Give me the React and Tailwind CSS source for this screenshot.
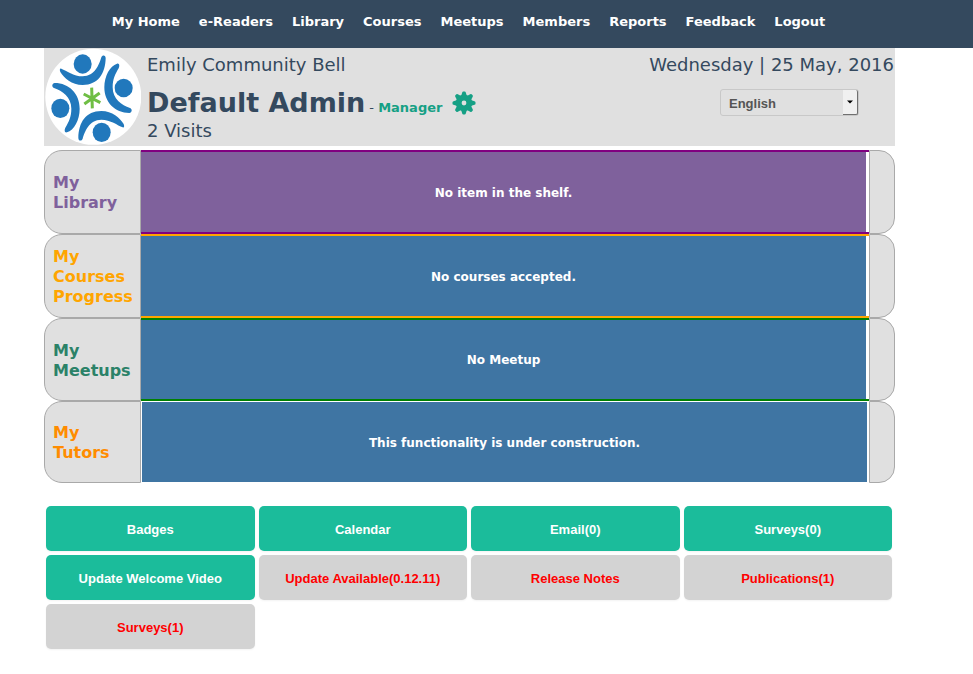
const NAV_ITEMS = ['My Home', 'e-Readers', 'Library', 'Courses', 'Meetups', 'Members', 'Reports', 'Feedback', 'Logout'];

const SHELVES = [
  {
    title: 'My Library',
    message: 'No item in the shelf.',
    titleClass: 'text-[#7f619c]',
    frameClass: 'h-[84px] border-y-2 border-[#800080] pr-[3px]',
    fillClass: 'bg-[#7f619c]',
  },
  {
    title: 'My Courses Progress',
    message: 'No courses accepted.',
    titleClass: 'text-[#ffa500]',
    frameClass: 'h-[84px] border-y-2 border-[#ffa500] pr-[3px]',
    fillClass: 'bg-[#3f75a3]',
  },
  {
    title: 'My Meetups',
    message: 'No Meetup',
    titleClass: 'text-[#2b8268]',
    frameClass: 'h-[83px] border-y-2 border-[#008000] pr-[3px]',
    fillClass: 'bg-[#3f75a3]',
  },
  {
    title: 'My Tutors',
    message: 'This functionality is under construction.',
    titleClass: 'text-[#ff8c00]',
    frameClass: 'h-[82px] py-px pl-px pr-0.5',
    fillClass: 'bg-[#3f75a3]',
  },
];

const ACTIONS = [
  { label: 'Badges' },
  { label: 'Calendar' },
  { label: 'Email(0)' },
  { label: 'Surveys(0)' },
  { label: 'Update Welcome Video' },
  { label: 'Update Available(0.12.11)', alert: true },
  { label: 'Release Notes', alert: true },
  { label: 'Publications(1)', alert: true },
  { label: 'Surveys(1)', alert: true },
];

const TEETH = [0, 45, 90, 135, 180, 225, 270, 315];

function Logo() {
  const arms = (
    <>
      <path d="M64 74C80 80 100 97 128 97C165 97 178 60 184 40C187 32 197 32 197 43C196 88 175 123 128 123C95 123 72 102 61 84C58 76 60 72 64 74Z" />
      <path d="M231 59C239 57 239 67 236 73C226 90 218 105 218 130C218 165 245 184 270 192C278 196 276 206 268 207C225 207 193 175 193 130C193 95 210 66 231 59Z" />
    </>
  );
  return (
    <svg viewBox="12 12 291 294" className="h-[98px] w-[97px] shrink-0" role="img" aria-label="Community logo">
      <circle cx="160" cy="158.500" r="144" fill="#fff" />
      <g fill="#2178bc">
        {arms}
        <g transform="rotate(180 156 162)">{arms}</g>
        <ellipse cx="128" cy="60" rx="27" ry="29" />
        <ellipse cx="251" cy="132" rx="27" ry="28" />
        <ellipse cx="61" cy="193" rx="27" ry="29" />
        <ellipse cx="185" cy="265" rx="27" ry="29" />
      </g>
      <path d="M155 131L157 193M131 150L181 176M133 180L179 147" stroke="#6fbe44" strokeWidth="9" fill="none" />
    </svg>
  );
}

function Gear() {
  return (
    <svg viewBox="-12 -12 24 24" className="size-6" fill="#16a085" aria-hidden="true">
      {TEETH.map((angle) => (
        <path key={angle} d="M-3.200 -6L-1.800 -10.500Q-1.500 -11.500 -0.700 -11.500L0.700 -11.500Q1.500 -11.500 1.800 -10.500L3.200 -6Z" transform={`rotate(${angle})`} />
      ))}
      <path fillRule="evenodd" d="M0 -8.200A8.200 8.200 0 1 1 0 8.200A8.200 8.200 0 1 1 0 -8.200ZM0 -2.400A2.400 2.400 0 1 0 0 2.400A2.400 2.400 0 1 0 0 -2.400Z" />
    </svg>
  );
}

function Shelf({ title, message, titleClass, frameClass, fillClass }) {
  return (
    <section className="flex">
      <h2 className={`flex w-[97px] shrink-0 items-center rounded-l-[18px] border border-[#a9a9a9] bg-[#e0e0e0] pt-0.5 pr-1 pl-2 text-base leading-5 font-bold ${titleClass}`}>
        <span className="w-20">{title}</span>
      </h2>
      <div className={`min-w-0 grow ${frameClass}`}>
        <p className={`flex h-full items-center justify-center pt-px text-xs font-bold text-white ${fillClass}`}>{message}</p>
      </div>
      <div className="w-[26px] shrink-0 rounded-r-[16px] border border-[#a9a9a9] bg-[#e0e0e0]" />
    </section>
  );
}

export default function App() {
  return (
    <div className="min-h-screen bg-white font-['DejaVu_Sans',Verdana,sans-serif] text-[#34495e]">
      <nav className="flex h-12 items-center bg-[#34495e] pr-[36px] pb-1">
        <ul className="flex grow justify-center gap-[19px] text-[13px] leading-5 font-bold text-white">
          {NAV_ITEMS.map((item) => (
            <li key={item}>
              <a href="#" className="whitespace-nowrap">{item}</a>
            </li>
          ))}
        </ul>
      </nav>
      <main className="mr-[78px] ml-11">
        <header className="flex bg-[#e0e0e0]">
          <Logo />
          <div className="flex grow flex-col pt-1 pl-1.5">
            <p className="text-lg leading-[26px]">Emily Community Bell</p>
            <h1 className="flex items-center pt-[5px]">
              <span className="text-[27px] leading-10 font-bold whitespace-nowrap">Default Admin</span>
              <span className="pt-2.5 pl-1 text-[13px] leading-5 whitespace-nowrap">
                - <a href="#" className="font-bold text-[#16a085]">Manager</a>
              </span>
              <button type="button" aria-label="Settings" className="ml-2.5">
                <Gear />
              </button>
            </h1>
            <p className="-mt-1 text-lg leading-6">2 Visits</p>
          </div>
          <div className="flex flex-col items-end pt-1">
            <p className="pr-px text-lg leading-[26px] whitespace-nowrap">Wednesday | 25 May, 2016</p>
            <div className="relative mt-[11px] mr-9 h-[27px] w-[139px]">
              <select aria-label="Language" className="size-full appearance-none rounded-[3px] border border-[#c8c8c8] bg-[#e0e0e0] pt-0.5 pl-2 font-['Liberation_Sans',Arial,sans-serif] text-[13px] leading-5 font-bold text-[#555]">
                <option>English</option>
              </select>
              <span className="pointer-events-none absolute top-px right-px bottom-px flex w-[15px] items-center justify-center rounded-r-[2px] border-r border-b border-[#707070] bg-[#f0f0f0]">
                <svg viewBox="0 0 6 4" className="h-1 w-1.5" aria-hidden="true"><path d="M0 0.500H6L3 3.500Z" fill="#000" /></svg>
              </span>
            </div>
          </div>
        </header>
        <div className="mt-1">
          {SHELVES.map((shelf) => (
            <Shelf key={shelf.title} {...shelf} />
          ))}
        </div>
        <div className="mt-[23px] grid grid-cols-4 gap-1 pr-[3px] pl-0.5">
          {ACTIONS.map(({ label, alert }) => (
            <button
              key={label}
              type="button"
              className={`h-[45px] rounded-[5px] pt-0.5 font-['Liberation_Sans',Arial,sans-serif] text-[13px] font-bold shadow-xs ${alert ? 'bg-[#d3d3d3] text-[#ff0000]' : 'bg-[#1bbc9b] text-white'}`}
            >
              {label}
            </button>
          ))}
        </div>
      </main>
    </div>
  );
}
